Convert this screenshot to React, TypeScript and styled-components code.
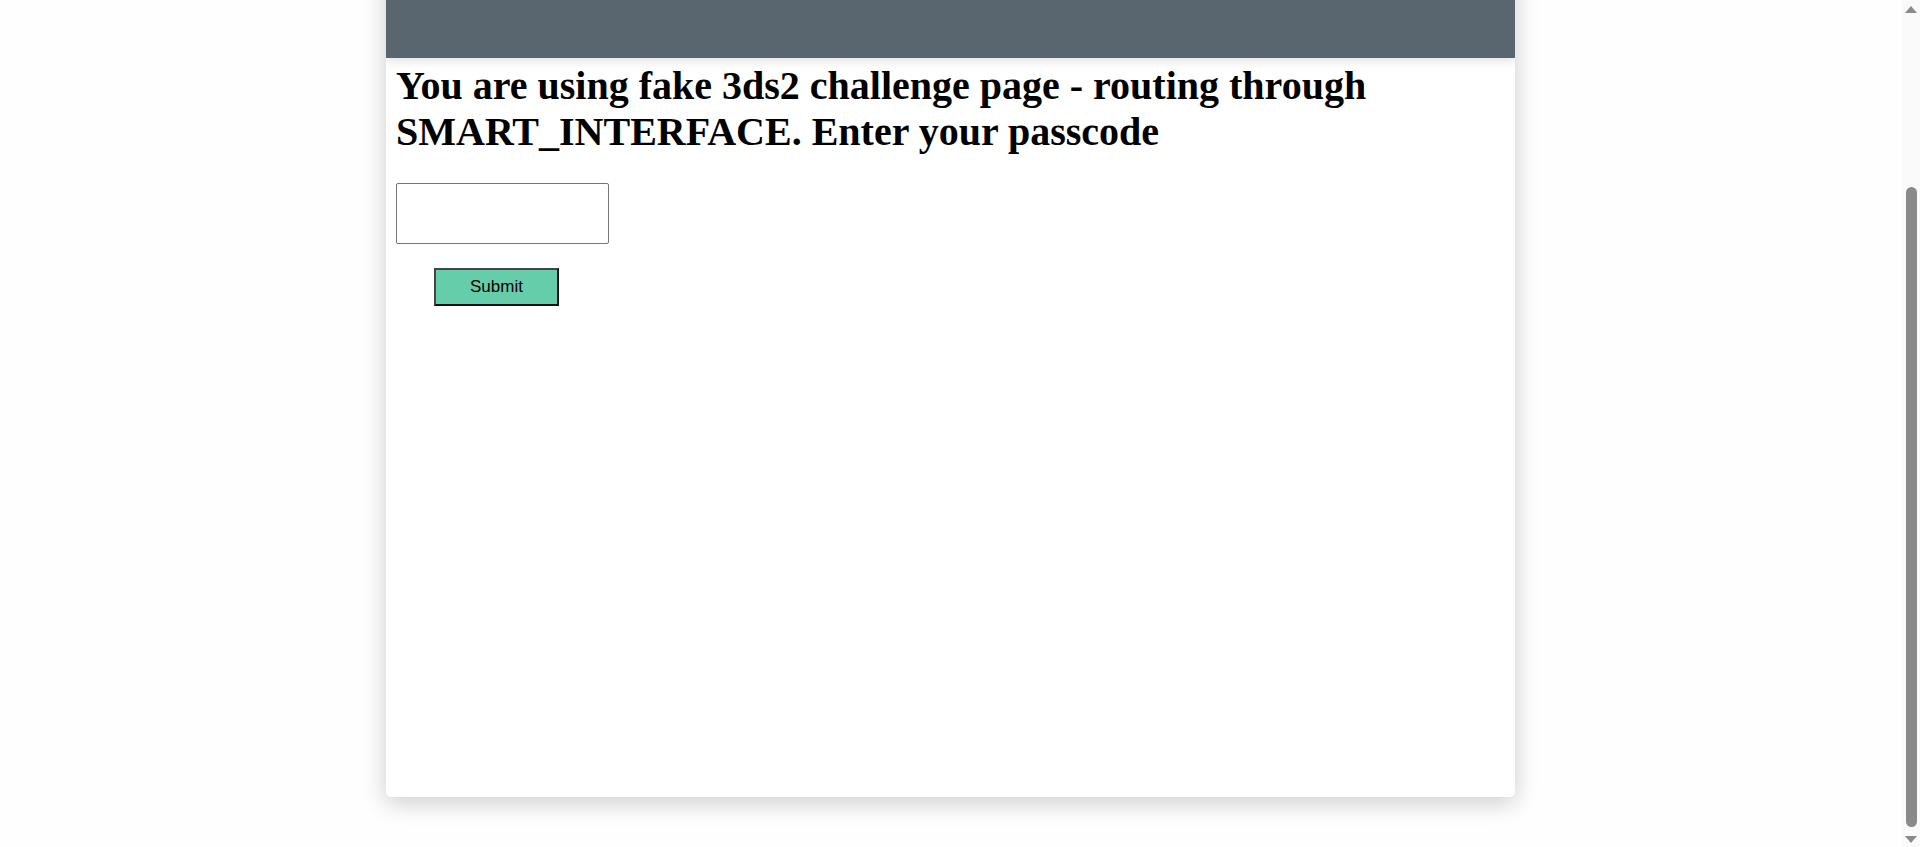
import React, { useLayoutEffect, useEffect } from "react";
import styled, { createGlobalStyle } from "styled-components";

const Global = createGlobalStyle`
  html, body { margin: 0; padding: 0; background: #fefefe; }
  body { font-family: "Liberation Serif", "Times New Roman", serif; }
`;

const Page = styled.div`
  padding: 50px 19px 50px 0;
`;

const Card = styled.div`
  width: 1129px;
  height: 980px;
  margin: 0 auto;
  background: #ffffff;
  border-radius: 5px;
  box-shadow: 0 6px 24px rgba(0, 0, 0, 0.2);
  overflow: hidden;
  display: flex;
  flex-direction: column;
`;

const Header = styled.div`
  height: 241px;
  flex: none;
  background: #5a666f;
  box-shadow: 0 3px 10px rgba(0, 0, 0, 0.12);
  position: relative;
  z-index: 1;
`;

const Body = styled.div`
  padding: 5px 10px;
  display: flex;
  flex-direction: column;
  align-items: flex-start;
`;

const Title = styled.h1`
  margin: 0;
  font-family: "Liberation Serif", "Times New Roman", serif;
  font-weight: 700;
  font-size: 40px;
  line-height: 46px;
  color: #000;
`;

const Form = styled.form`
  display: flex;
  flex-direction: column;
  align-items: flex-start;
  margin-top: 28px;
`;

const Input = styled.input`
  box-sizing: border-box;
  width: 213px;
  height: 61px;
  border: 1px solid #767676;
  border-radius: 2px;
  background: #fff;
  padding: 0 4px;
  font-size: 16px;
`;

const Button = styled.button`
  box-sizing: border-box;
  margin: 24px 0 0 38px;
  width: 125px;
  height: 38px;
  background: #66cdaa;
  border: 2px solid #111;
  border-top-color: #444;
  border-left-color: #444;
  font-family: "Liberation Sans", Arial, sans-serif;
  font-size: 17px;
  color: #000;
  padding: 0;
`;

/* Browser scrollbar drawn over the page edge */
const ScrollTrack = styled.div`
  position: fixed;
  top: 0;
  right: 0;
  bottom: 0;
  width: 18px;
  background: #fafafa;
  display: flex;
  flex-direction: column;
  align-items: center;
  justify-content: space-between;
  padding: 6px 0 4px;
  box-sizing: border-box;
  z-index: 10;
`;

const Arrow = styled.div<{ $down?: boolean }>`
  width: 0;
  height: 0;
  border-left: 6px solid transparent;
  border-right: 6px solid transparent;
  ${(p) =>
    p.$down
      ? "border-top: 7px solid #8a8a8a;"
      : "border-bottom: 7px solid #8a8a8a;"}
`;

const TrackInner = styled.div`
  flex: 1;
  width: 100%;
  display: flex;
  flex-direction: column;
  align-items: center;
`;

const Thumb = styled.div`
  width: 11px;
  border-radius: 6px;
  background: #8a8a8a;
  margin-top: 174px;
  flex: 1;
  margin-bottom: 9px;
`;

export default function App() {
  const toBottom = () => window.scrollTo(0, 100000);
  useLayoutEffect(toBottom, []);
  useEffect(() => {
    toBottom();
    const t = setTimeout(toBottom, 50);
    return () => clearTimeout(t);
  }, []);
  return (
    <>
      <Global />
      <Page>
        <Card>
          <Header />
          <Body>
            <Title>
              You are using fake 3ds2 challenge page - routing through
              SMART_INTERFACE. Enter your passcode
            </Title>
            <Form onSubmit={(e) => e.preventDefault()}>
              <Input type="text" aria-label="passcode" />
              <Button type="submit">Submit</Button>
            </Form>
          </Body>
        </Card>
      </Page>
      <ScrollTrack aria-hidden="true">
        <Arrow />
        <TrackInner>
          <Thumb />
        </TrackInner>
        <Arrow $down />
      </ScrollTrack>
    </>
  );
}
